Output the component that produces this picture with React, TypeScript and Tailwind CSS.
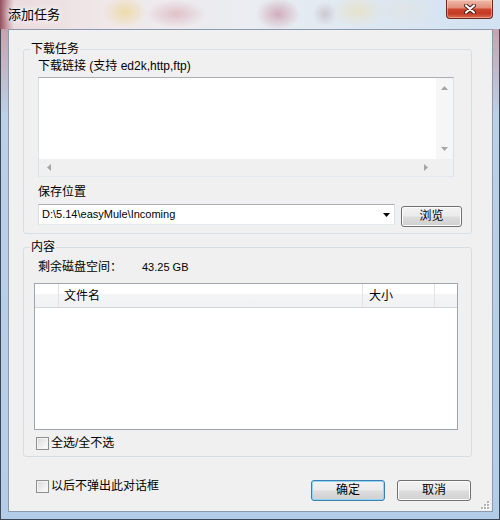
import clsx from "clsx";

const FONT = "font-['Liberation_Sans','Noto_Sans_CJK_SC',sans-serif]";

type Dir = "up" | "down" | "left" | "right";

function Arrow({ dir, className }: { dir: Dir; className?: string }) {
  const vertical = dir === "up" || dir === "down";
  const points = {
    up: "0,4 3.5,0 7,4",
    down: "0,0 7,0 3.5,4",
    left: "4,0 4,7 0,3.5",
    right: "0,0 0,7 4,3.5",
  }[dir];
  return (
    <svg
      width={vertical ? 7 : 4}
      height={vertical ? 4 : 7}
      viewBox={vertical ? "0 0 7 4" : "0 0 4 7"}
      className={className}
    >
      <polygon points={points} fill="currentColor" />
    </svg>
  );
}

function WinButton({ label, primary }: { label: string; primary?: boolean }) {
  return (
    <button
      className={clsx(
        "h-[21px] w-full rounded-[3px] border text-[12px] leading-none text-black",
        "bg-[linear-gradient(180deg,#f2f2f2_0%,#ebebeb_48%,#dddddd_52%,#cfcfcf_100%)]",
        primary
          ? "border-[#3c7fb1] shadow-[inset_0_0_0_1px_#8fd6f7]"
          : "border-[#707070] shadow-[inset_0_0_0_1px_#fcfcfc]",
      )}
    >
      {label}
    </button>
  );
}

function CheckBox({ label }: { label: string }) {
  return (
    <label className="flex h-[16px] items-center gap-[2px] text-[12px] leading-[15px]">
      <span className="h-[13px] w-[13px] border border-[#8e8f8f] bg-[linear-gradient(135deg,#d8d8d8_0%,#f0f0f0_60%,#fdfdfd_100%)] shadow-[inset_0_0_0_1px_#f4f4f4]" />
      <span>{label}</span>
    </label>
  );
}

function GroupBox({
  title,
  className,
  children,
}: {
  title: string;
  className?: string;
  children: React.ReactNode;
}) {
  return (
    <fieldset
      className={clsx(
        "ml-[14px] w-[449px] rounded-[3px] border border-[#d5dfe5]",
        className,
      )}
    >
      <legend className="ml-[6px] px-[1px] text-[12px] leading-[15px]">
        {title}
      </legend>
      {children}
    </fieldset>
  );
}

function UrlBox() {
  return (
    <div className="ml-[14px] mt-[3px] flex h-[100px] w-[416px] flex-col border border-[#abadb3] border-x-[#dbdfe6] border-b-[#e3e9ef] bg-white">
      <div className="flex flex-1">
        <div className="flex-1" />
        <div className="flex w-[17px] flex-col items-center justify-between bg-[#f6f6f6] pb-[8px] pt-[8px] text-[#a6a6a6]">
          <Arrow dir="up" />
          <Arrow dir="down" />
        </div>
      </div>
      <div className="flex h-[17px]">
        <div className="flex flex-1 items-center justify-between bg-[#f0f0f0] px-[8px] text-[#a6a6a6]">
          <Arrow dir="left" />
          <Arrow dir="right" />
        </div>
        <div className="w-[17px] bg-[#f0f0f0]" />
      </div>
    </div>
  );
}

function FileList() {
  return (
    <div className="ml-[10px] mt-[8px] flex h-[147px] w-[424px] flex-col border border-[#a0a5ad] bg-white">
      <div className="flex h-[24px] border-b border-[#d5d5d5] bg-[linear-gradient(180deg,#ffffff_0%,#ffffff_42%,#f3f4f6_43%,#f1f2f4_100%)] text-[12px]">
        <div className="w-[24px] border-r border-[#e3e3e3]" />
        <div className="flex w-[304px] items-center border-r border-[#e3e3e3] pl-[5px]">
          文件名
        </div>
        <div className="flex w-[72px] items-center border-r border-[#e3e3e3] pl-[6px]">
          大小
        </div>
        <div className="flex-1" />
      </div>
      <div className="flex-1" />
    </div>
  );
}

export default function App() {
  return (
    <div
      className={clsx(
        FONT,
        "flex h-[520px] w-[500px] flex-col border-x border-b border-[#3d4756] pl-[7px] pr-[6px] text-black",
        "bg-[linear-gradient(180deg,#b87884_0%,#c9a4ac_6%,#bcd0e6_22%,#b3cde9_100%)]",
      )}
    >
      {/* aero title bar */}
      <div className="-ml-[8px] -mr-[7px] flex h-[29px] bg-[radial-gradient(ellipse_22px_16px_at_125px_12px,rgba(236,214,150,0.75),transparent),radial-gradient(ellipse_30px_14px_at_176px_14px,rgba(214,160,172,0.55),transparent),radial-gradient(ellipse_22px_16px_at_278px_14px,rgba(196,132,150,0.6),transparent),radial-gradient(ellipse_12px_12px_at_325px_14px,rgba(180,160,170,0.45),transparent),radial-gradient(ellipse_26px_16px_at_358px_11px,rgba(234,224,190,0.7),transparent),radial-gradient(ellipse_30px_16px_at_405px_10px,rgba(225,228,228,0.8),transparent),linear-gradient(90deg,#94505e_0px,#c79aa4_7px,#eadadd_14px,#f0e8ea_22%,#eaedf2_50%,#dde7f1_75%,#d2e2f2_100%)] pl-[8px] pr-[7px]">
        <span className="pt-[7px] text-[13px] leading-[15px] [text-shadow:0_0_6px_#fff,0_0_10px_#fff]">
          添加任务
        </span>
        <div className="ml-auto flex h-[19px] w-[47px] items-center justify-center rounded-b-[4px] border-x border-b border-[#6b2a20] bg-[linear-gradient(180deg,#efb9aa_0%,#e3917d_42%,#cb462d_52%,#c23b24_75%,#dc6c4d_100%)] shadow-[inset_0_0_0_1px_rgba(255,220,210,0.45)]">
          <svg width="12" height="10" viewBox="0 0 12 10">
            <path
              d="M2 1.5 L10 8.5 M10 1.5 L2 8.5"
              stroke="#4a1810"
              strokeWidth="4"
              strokeLinecap="round"
            />
            <path
              d="M2 1.5 L10 8.5 M10 1.5 L2 8.5"
              stroke="#ffffff"
              strokeWidth="2.2"
              strokeLinecap="round"
            />
          </svg>
        </div>
      </div>

      {/* client area */}
      <div className="relative flex h-[483px] w-[485px] flex-col border border-[#8b9aae] bg-[#f0f0f0] pt-[12px]">
        <GroupBox title="下载任务" className="pb-[6px]">
          <div className="ml-[14px] mt-[2px] text-[12px] leading-[15px]">
            下载链接 (支持 ed2k,http,ftp)
          </div>
          <UrlBox />
          <div className="ml-[14px] mt-[8px] text-[12px] leading-[15px]">
            保存位置
          </div>
          <div className="ml-[14px] mt-[3px] flex items-start gap-[6px]">
            <div className="mt-[1px] flex h-[21px] w-[357px] items-center border border-[#abadb3] border-x-[#dbdfe6] border-b-[#e3e9ef] bg-white pl-[3px] pr-[4px] text-[11px]">
              <span className="flex-1">D:\5.14\easyMule\Incoming</span>
              <Arrow dir="down" className="text-black" />
            </div>
            <div className="w-[61px]">
              <WinButton label="浏览" />
            </div>
          </div>
        </GroupBox>

        <GroupBox title="内容" className="mt-[6px] pb-[5px]">
          <div className="ml-[14px] mt-[5px] flex text-[12px] leading-[15px]">
            <span className="w-[104px]">剩余磁盘空间：</span>
            <span className="text-[11px]">43.25 GB</span>
          </div>
          <FileList />
          <div className="ml-[12px] mt-[5px]">
            <CheckBox label="全选/全不选" />
          </div>
        </GroupBox>

        <div className="mt-[20px] flex items-start pl-[27px] pr-[21px]">
          <div className="mt-[1px]">
            <CheckBox label="以后不弹出此对话框" />
          </div>
          <div className="ml-auto flex gap-[12px]">
            <div className="w-[74px]">
              <WinButton label="确定" primary />
            </div>
            <div className="w-[74px]">
              <WinButton label="取消" />
            </div>
          </div>
        </div>

        {/* size grip */}
        <svg
          width="10"
          height="10"
          viewBox="0 0 10 10"
          className="absolute bottom-0 right-[1px]"
        >
          {[
            [6, 0],
            [3, 3],
            [6, 3],
            [0, 6],
            [3, 6],
            [6, 6],
          ].map(([x, y]) => (
            <g key={`${x}-${y}`}>
              <rect x={x + 1} y={y + 1} width="2" height="2" fill="#ffffff" />
              <rect x={x} y={y} width="2" height="2" fill="#b4b4b4" />
            </g>
          ))}
        </svg>
      </div>
    </div>
  );
}
